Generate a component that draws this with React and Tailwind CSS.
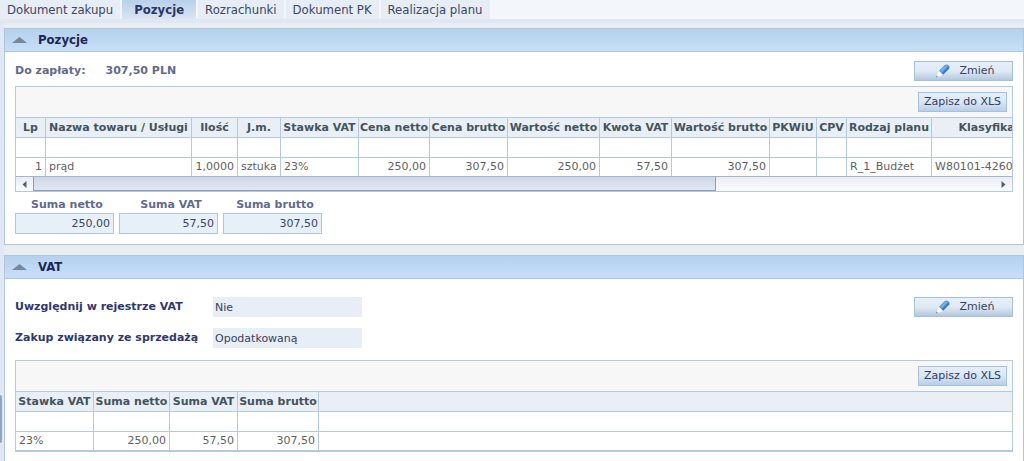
const tabs = ["Dokument zakupu", "Pozycje", "Rozrachunki", "Dokument PK", "Realizacja planu"];

const items = [
  { label: "Lp", width: 30, value: "1", right: true },
  { label: "Nazwa towaru / Usługi", width: 146, value: "prąd" },
  { label: "Ilość", width: 46, value: "1,0000", right: true },
  { label: "J.m.", width: 43, value: "sztuka" },
  { label: "Stawka VAT", width: 78, value: "23%" },
  { label: "Cena netto", width: 71, value: "250,00", right: true },
  { label: "Cena brutto", width: 78, value: "307,50", right: true },
  { label: "Wartość netto", width: 92, value: "250,00", right: true },
  { label: "Kwota VAT", width: 72, value: "57,50", right: true },
  { label: "Wartość brutto", width: 98, value: "307,50", right: true },
  { label: "PKWiU", width: 47, value: "" },
  { label: "CPV", width: 30, value: "" },
  { label: "Rodzaj planu", width: 85, value: "R_1_Budżet" },
  { label: "Klasyfikacja", width: 128, value: "W80101-4260" },
];

const vatColumns = [
  { label: "Stawka VAT", width: 78, value: "23%" },
  { label: "Suma netto", width: 76, value: "250,00", right: true },
  { label: "Suma VAT", width: 68, value: "57,50", right: true },
  { label: "Suma brutto", width: 81, value: "307,50", right: true },
];

function Pencil() {
  return (
    <svg className="h-4 w-4 shrink-0" viewBox="0 0 16 16" aria-hidden="true">
      <path d="M4 8.2 7.8 11.8 4.4 13.6 2.4 13.6 2.2 11.6Z" fill="#fbfcfd" />
      <path d="M1.4 12.8 2.8 14 1.4 14.2Z" fill="#55606c" />
      <path d="M4.2 7.8 9.8 2 12.4 1.6 14.6 3.4 14.2 5.4 8.2 11.6Z" fill="#4a8ad4" />
      <path d="M5.2 7.4 10.4 2.4 12.4 2.2 13 3 7 9Z" fill="#79aee8" />
      <path d="M7 10.4 13.6 4 14.2 5.4 8.2 11.6Z" fill="#3a76c2" />
    </svg>
  );
}

function EditButton() {
  return (
    <button
      type="button"
      className="flex h-5 w-[99px] shrink-0 items-center justify-center gap-2 border border-[#a9bfd6] bg-linear-to-b from-[#e6effa] via-[#dfeaf5] to-[#b4c8dc] pl-[3px] text-[11px] text-[#38415e]"
    >
      <Pencil />
      Zmień
    </button>
  );
}

function GridToolbar() {
  return (
    <div className="flex h-[30px] items-center justify-end bg-[#f7f7f7] pr-[5px]">
      <button
        type="button"
        className="h-5 w-[89px] border border-[#a9c0dc] bg-linear-to-b from-[#e3eefb] via-[#dae7f5] to-[#b9cee6] text-[11px] whitespace-nowrap text-[#2f3f5f]"
      >
        Zapisz do XLS
      </button>
    </div>
  );
}

function Grid({ columns, filler }) {
  const line = "border-[#b3c9dc]";
  return (
    <table className="w-full table-fixed border-separate border-spacing-0 text-[11px] leading-4">
      <colgroup>
        {columns.map((c) => (
          <col key={c.label} style={{ width: c.width }} />
        ))}
        {filler && <col />}
      </colgroup>
      <thead>
        <tr className="h-[21px] bg-[#e9eff4]">
          {columns.map((c) => (
            <th key={c.label} scope="col" className={`border-y border-r p-0 text-center font-bold whitespace-nowrap text-[#44535f] ${line}`}>
              {c.label}
            </th>
          ))}
          {filler && <td className={`border-y p-0 ${line}`} />}
        </tr>
      </thead>
      <tbody>
        <tr className="h-5">
          {columns.map((c) => (
            <td key={c.label} className={`border-r border-b p-0 ${line}`} />
          ))}
          {filler && <td className={`border-b p-0 ${line}`} />}
        </tr>
        <tr className="h-[18px] text-[#5f5f5f]">
          {columns.map((c) => (
            <td key={c.label} className={`border-r px-[3px] py-0 whitespace-nowrap ${line} ${c.right ? "text-right" : "text-left"}`}>
              {c.value}
            </td>
          ))}
          {filler && <td className="p-0" />}
        </tr>
      </tbody>
    </table>
  );
}

function ScrollBar() {
  const button = "flex w-[17px] shrink-0 items-center justify-center";
  return (
    <div className="flex h-[15px] border-t border-[#a3b5cc] bg-linear-to-b from-[#e9edf3] to-[#fbfcfd]">
      <button type="button" aria-label="Przewiń w lewo" className={button}>
        <svg className="h-[7px] w-[5px]" viewBox="0 0 5 7" aria-hidden="true">
          <path d="M4.5 0v7L.5 3.5Z" fill="#4d5f78" />
        </svg>
      </button>
      <div className="flex grow">
        <div className="w-[71%] border-x border-b border-[#8c9db8] bg-linear-to-b from-[#cfd8e7] to-[#e1e7f2]" />
      </div>
      <button type="button" aria-label="Przewiń w prawo" className={button}>
        <svg className="h-[7px] w-[5px]" viewBox="0 0 5 7" aria-hidden="true">
          <path d="M.5 0v7l4-3.5Z" fill="#4d5f78" />
        </svg>
      </button>
    </div>
  );
}

function Panel({ title, children }) {
  return (
    <section className="border border-[#b0c4da] bg-white">
      <h2 className="border-b border-[#aac4e2] bg-linear-to-b from-[#b5d1ed] to-[#c7def8] font-['DejaVu_Sans_Condensed','DejaVu_Sans',sans-serif] text-[13px] font-bold text-[#1d2556]">
        <button type="button" className="flex h-[22px] w-full items-center gap-[11px] pl-[7px] text-left">
          <svg className="h-[6px] w-[15px]" viewBox="0 0 15 6" aria-hidden="true">
            <path d="M7.5 0 15 6H0Z" fill="#76879a" />
          </svg>
          {title}
        </button>
      </h2>
      <div className="px-[10px]">{children}</div>
    </section>
  );
}

function Sum({ id, label, value }) {
  return (
    <div className="flex w-[99px] flex-col">
      <label htmlFor={id} className="h-4 pl-[5px] text-center text-[11px] leading-4 font-bold text-[#626a8c]">
        {label}
      </label>
      <input
        id={id}
        readOnly
        defaultValue={value}
        className="h-[21px] w-full border border-[#b3c6d8] bg-[#e7eff7] px-[3px] text-right text-[11px] text-[#3b4468]"
      />
    </div>
  );
}

function Field({ id, label, value }) {
  return (
    <div className="flex items-center">
      <label htmlFor={id} className="w-[198px] text-[11px] font-bold whitespace-nowrap text-[#2f386b]">
        {label}
      </label>
      <input id={id} readOnly defaultValue={value} className="h-5 w-[149px] bg-[#e7eef6] px-[2px] text-[11px] text-[#38415f]" />
    </div>
  );
}

export default function App() {
  return (
    <div className="min-h-screen bg-[#e8edf3] font-['DejaVu_Sans',sans-serif]">
      <nav className="flex gap-[2px] border-b-4 border-[#dfe8f1] bg-[#f3f7fb] font-['DejaVu_Sans_Condensed','DejaVu_Sans',sans-serif]">
        {tabs.map((tab) => (
          <a
            key={tab}
            href="#"
            className={
              tab === "Pozycje"
                ? "h-[19px] bg-linear-to-b from-[#b9d0ea] to-[#d8e5f3] px-3 text-[13px] leading-[19px] font-bold text-[#2b3566]"
                : "h-[19px] bg-[#e6edf5] px-[7px] text-[13px] leading-[19px] text-[#3c4566]"
            }
          >
            {tab}
          </a>
        ))}
      </nav>
      <div className="flex">
        <div className="flex w-1 shrink-0 flex-col bg-[#dfe8f4] pt-[372px]">
          <div className="h-12 w-[2px] rounded-r bg-[#8fa5c4]" />
        </div>
        <main className="flex min-w-0 grow flex-col gap-[10px] pt-[5px]">
          <Panel title="Pozycje">
            <div className="flex items-center justify-between pt-[9px] pb-[5px]">
              <dl className="flex gap-5 text-[11px] font-bold text-[#626a8c]">
                <dt>Do zapłaty:</dt>
                <dd>307,50 PLN</dd>
              </dl>
              <EditButton />
            </div>
            <div className="overflow-hidden border border-[#b3c9dc]">
              <GridToolbar />
              <div className="overflow-hidden">
                <div className="w-[1044px]">
                  <Grid columns={items} />
                </div>
              </div>
              <ScrollBar />
            </div>
            <div className="flex gap-[5px] pt-[5px] pb-[10px]">
              <Sum id="sum-net" label="Suma netto" value="250,00" />
              <Sum id="sum-vat" label="Suma VAT" value="57,50" />
              <Sum id="sum-gross" label="Suma brutto" value="307,50" />
            </div>
          </Panel>
          <Panel title="VAT">
            <div className="flex items-start justify-between pt-[18px] pb-3">
              <div className="flex flex-col gap-[11px]">
                <Field id="vat-register" label="Uwzględnij w rejestrze VAT" value="Nie" />
                <Field id="vat-purchase" label="Zakup związany ze sprzedażą" value="Opodatkowaną" />
              </div>
              <EditButton />
            </div>
            <div className="mb-[10px] border border-b-2 border-[#b3c9dc]">
              <GridToolbar />
              <Grid columns={vatColumns} filler />
            </div>
          </Panel>
        </main>
      </div>
    </div>
  );
}
